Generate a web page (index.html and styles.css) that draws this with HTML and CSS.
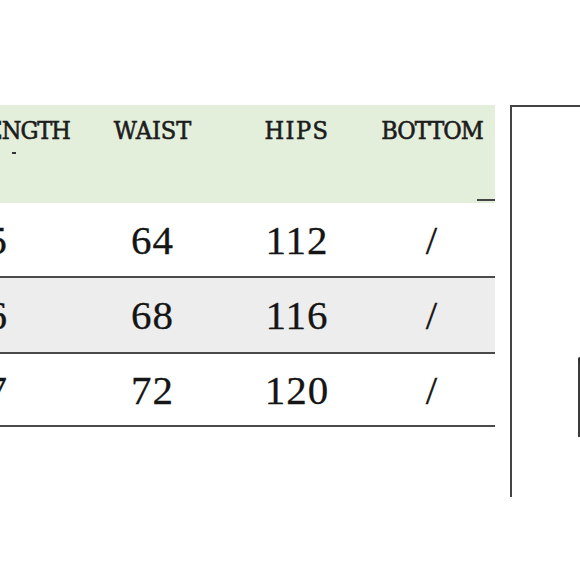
FILE: index.html
```html
<!DOCTYPE html>
<html>
<head>
<meta charset="utf-8">
<link rel="stylesheet" href="styles.css">
</head>
<body>
<div class="page">
  <div class="table">
    <div class="row head">
      <div class="cell first"><span class="lbl">LENGTH</span><span class="mark"></span></div>
      <div class="cell">WAIST</div>
      <div class="cell wide">HIPS</div>
      <div class="cell tight">BOTTOM</div>
    </div>
    <div class="row data">
      <div class="cell first">95</div>
      <div class="cell">64</div>
      <div class="cell">112</div>
      <div class="cell">/</div>
    </div>
    <div class="row data alt">
      <div class="cell first">96</div>
      <div class="cell">68</div>
      <div class="cell">116</div>
      <div class="cell">/</div>
    </div>
    <div class="row data">
      <div class="cell first">97</div>
      <div class="cell">72</div>
      <div class="cell">120</div>
      <div class="cell">/</div>
    </div>
  </div>
  <div class="figure">
    <div class="figure-edge"></div>
  </div>
</div>
</body>
</html>
```
FILE: styles.css
```css
html, body {
  margin: 0;
  padding: 0;
  background: #ffffff;
  overflow: hidden;
}
.page {
  width: 580px;
  height: 580px;
  display: flex;
  align-items: flex-start;
  padding-top: 105px;
  box-sizing: border-box;
  overflow: hidden;
}
.table {
  flex: 0 0 560px;
  margin-left: -65px;
  display: flex;
  flex-direction: column;
}
.row {
  display: grid;
  grid-template-columns: 145px 145px 144px 126px;
}
.head {
  position: relative;
  height: 98px;
  background: #e3eedb;
  font-family: "DejaVu Serif Condensed", "DejaVu Serif", serif;
  font-stretch: condensed;
  font-weight: normal;
  font-size: 25px;
  letter-spacing: 0;
  -webkit-text-stroke: 0.6px #1c1c1c;
  color: #1c1c1c;
}
.head::after {
  content: "";
  position: absolute;
  right: 0;
  bottom: 2px;
  width: 18px;
  height: 2px;
  background: #444;
}
.head .cell {
  text-align: center;
  padding-top: 11px;
  line-height: 30px;
}
.head .cell.wide {
  letter-spacing: 1.5px;
}
.head .cell.tight {
  letter-spacing: -1px;
}
.head .cell.first {
  text-align: right;
  padding-right: 10px;
  letter-spacing: -1px;
  position: relative;
}
.mark {
  position: absolute;
  left: 77px;
  top: 47px;
  width: 4px;
  height: 2px;
  background: #333;
}
.data {
  height: 71px;
  border-bottom: 2px solid #4a4a4a;
  font-family: "Liberation Serif", serif;
  font-size: 41px;
  letter-spacing: 1px;
  -webkit-text-stroke: 0.3px #151515;
  color: #151515;
  align-items: center;
}
.data.alt {
  background: #ededed;
  height: 74px;
}
.row.data:nth-child(2) {
  height: 73px;
}
.data .cell {
  text-align: center;
  line-height: 40px;
}
.data .cell.first {
  text-align: right;
  padding-right: 72px;
}
.figure {
  flex: 0 0 auto;
  margin-left: 15px;
  width: 68px;
  height: 390px;
  border-left: 2px solid #444;
  border-top: 2px solid #444;
  position: relative;
}
.figure-edge {
  position: absolute;
  right: 0;
  top: 250px;
  width: 2px;
  height: 80px;
  border-left: 2px solid #3a3a3a;
  border-top: 8px solid #2a2a2a;
  border-radius: 3px 0 0 0;
  box-sizing: border-box;
}
```
